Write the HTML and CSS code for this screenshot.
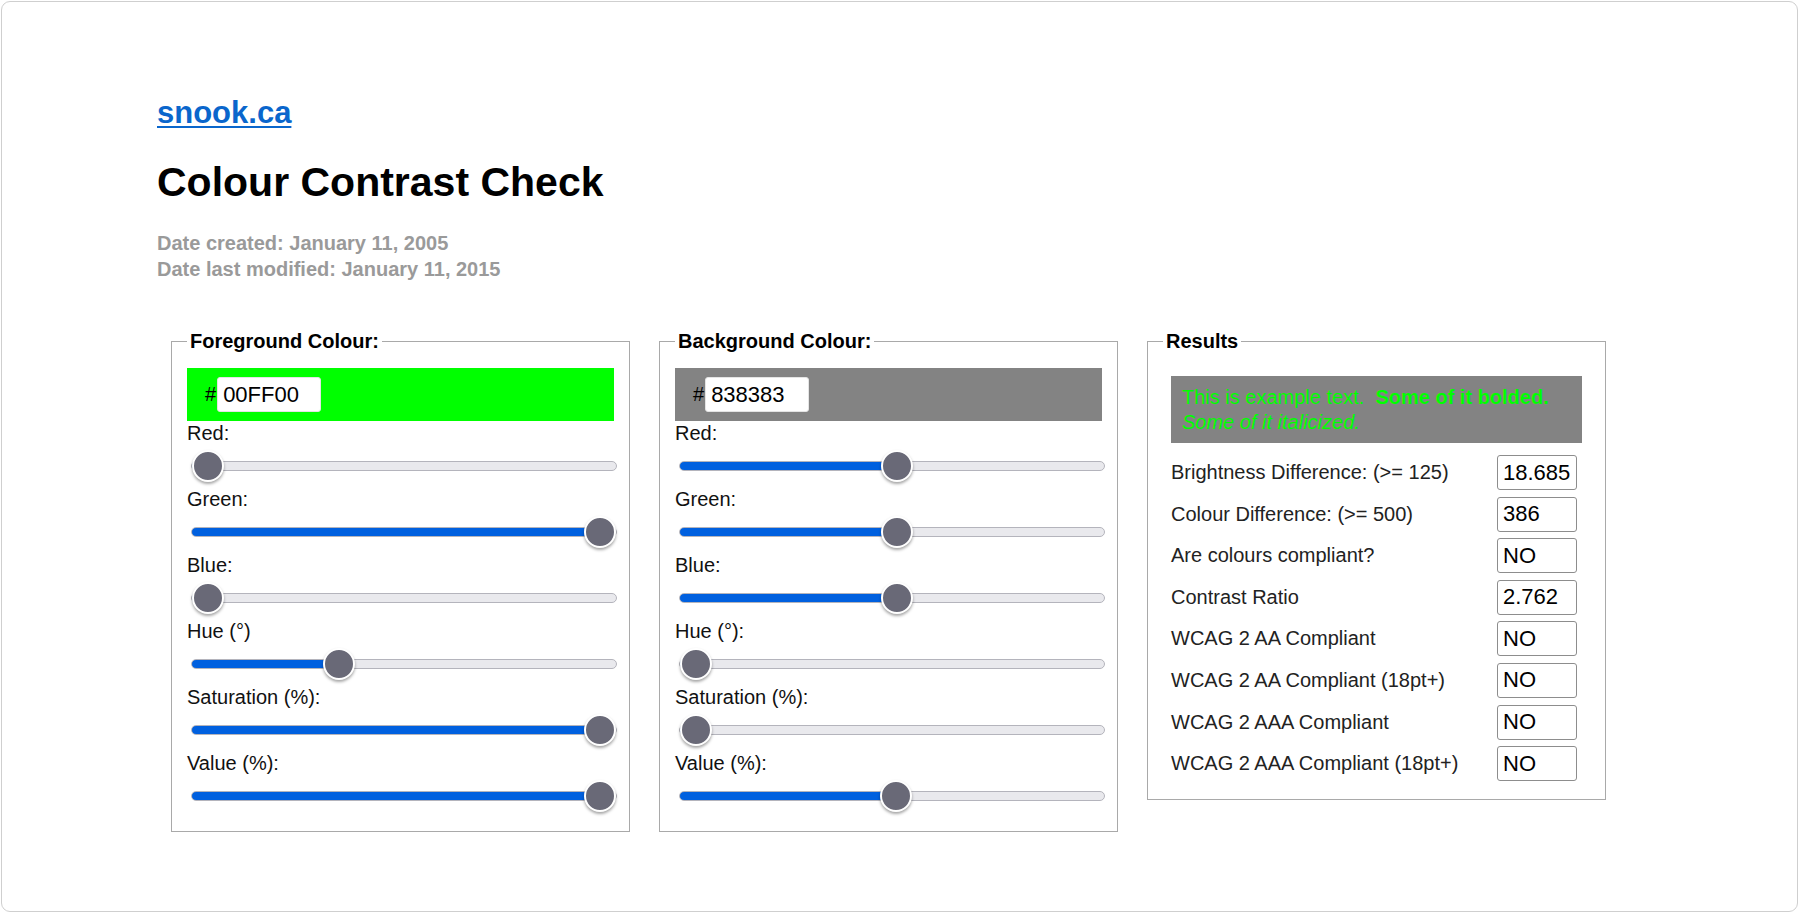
FILE: index.html
```html
<!DOCTYPE html>
<html lang="en">
<head>
<meta charset="utf-8">
<title>Colour Contrast Check</title>
<link rel="stylesheet" href="styles.css">
</head>
<body>
<div class="frame">
  <p class="site"><a href="#">snook.ca</a></p>
  <h1 class="title">Colour Contrast Check</h1>
  <p class="dates">Date created: January 11, 2005<br>Date last modified: January 11, 2015</p>

  <div class="panels">
    <fieldset class="panel">
      <legend>Foreground Colour:</legend>
      <div class="swatch swatch-fg">
        <span class="hash">#</span><input class="hex" type="text" value="00FF00">
      </div>
      <label class="lbl">Red:</label>
      <input class="range" type="range" min="0" max="255" value="0" style="--v:0">
      <label class="lbl">Green:</label>
      <input class="range" type="range" min="0" max="255" value="255" style="--v:1">
      <label class="lbl">Blue:</label>
      <input class="range" type="range" min="0" max="255" value="0" style="--v:0">
      <label class="lbl">Hue (°)</label>
      <input class="range" type="range" min="0" max="360" value="120" style="--v:0.3333">
      <label class="lbl">Saturation (%):</label>
      <input class="range" type="range" min="0" max="100" value="100" style="--v:1">
      <label class="lbl">Value (%):</label>
      <input class="range" type="range" min="0" max="100" value="100" style="--v:1">
    </fieldset>

    <fieldset class="panel">
      <legend>Background Colour:</legend>
      <div class="swatch swatch-bg">
        <span class="hash">#</span><input class="hex" type="text" value="838383">
      </div>
      <label class="lbl">Red:</label>
      <input class="range" type="range" min="0" max="255" value="131" style="--v:0.5137">
      <label class="lbl">Green:</label>
      <input class="range" type="range" min="0" max="255" value="131" style="--v:0.5137">
      <label class="lbl">Blue:</label>
      <input class="range" type="range" min="0" max="255" value="131" style="--v:0.5137">
      <label class="lbl">Hue (°):</label>
      <input class="range" type="range" min="0" max="360" value="0" style="--v:0">
      <label class="lbl">Saturation (%):</label>
      <input class="range" type="range" min="0" max="100" value="0" style="--v:0">
      <label class="lbl">Value (%):</label>
      <input class="range" type="range" min="0" max="100" value="51" style="--v:0.51">
    </fieldset>

    <fieldset class="panel">
      <legend>Results</legend>
      <div class="results">
        <div class="sample">This is example text.&nbsp; <strong>Some of it bolded.</strong> <em>Some of it italicized.</em></div>
        <div class="rows">
          <span class="rlabel">Brightness Difference: (&gt;= 125)</span><input class="out" type="text" value="18.685" readonly>
          <span class="rlabel">Colour Difference: (&gt;= 500)</span><input class="out" type="text" value="386" readonly>
          <span class="rlabel">Are colours compliant?</span><input class="out" type="text" value="NO" readonly>
          <span class="rlabel">Contrast Ratio</span><input class="out" type="text" value="2.762" readonly>
          <span class="rlabel">WCAG 2 AA Compliant</span><input class="out" type="text" value="NO" readonly>
          <span class="rlabel">WCAG 2 AA Compliant (18pt+)</span><input class="out" type="text" value="NO" readonly>
          <span class="rlabel">WCAG 2 AAA Compliant</span><input class="out" type="text" value="NO" readonly>
          <span class="rlabel">WCAG 2 AAA Compliant (18pt+)</span><input class="out" type="text" value="NO" readonly>
        </div>
      </div>
    </fieldset>
  </div>
</div>
</body>
</html>
```

FILE: styles.css
```css
* { box-sizing: border-box; }

html, body {
  margin: 0;
  padding: 0;
  background: #fff;
}

body {
  font-family: "Liberation Sans", Arial, Helvetica, sans-serif;
  font-size: 20px;
  color: #222;
}

.frame {
  margin: 1px 1px 0 1px;
  width: 1797px;
  height: 911px;
  border: 1px solid #cfcfcf;
  border-radius: 9px;
  padding: 94px 0 0 155px;
  overflow: hidden;
}

.site {
  margin: 0;
  font-size: 31px;
  font-weight: bold;
  line-height: 34px;
}

.site a {
  color: #0a66cc;
  text-decoration: underline;
  text-decoration-thickness: 2px;
  text-underline-offset: 3px;
}

.title {
  margin: 29px 0 0;
  font-size: 41px;
  font-weight: bold;
  line-height: 46px;
  color: #000;
}

.dates {
  margin: 25px 0 0;
  font-size: 20px;
  font-weight: bold;
  line-height: 26px;
  color: #9a9a9a;
}

.panels {
  display: flex;
  align-items: flex-start;
  gap: 29px;
  margin-top: 47.5px;
  padding-left: 14px;
}

.panel {
  width: 459px;
  min-width: 0;
  margin: 0;
  padding: 15px 15px 14px;
  border: 1px solid #a9a9a9;
}

.panel legend {
  padding: 0 3px;
  font-weight: bold;
  font-size: 20px;
  line-height: 23px;
  color: #000;
}

.swatch {
  display: flex;
  align-items: center;
  height: 53px;
  padding: 1px 18px 0;
}

.swatch-fg { background: #00ff00; }
.swatch-bg { background: #838383; }

.hash {
  font-size: 20px;
  color: #000;
  margin-right: 1px;
}

.hex {
  width: 104px;
  height: 35px;
  padding: 0 5px;
  border: 1px solid #e4e4e4;
  border-radius: 3px;
  background: #fff;
  font-family: "Liberation Sans", Arial, sans-serif;
  font-size: 22px;
  color: #000;
}

.lbl {
  display: block;
  margin: 0;
  line-height: 25px;
  color: #111;
}

.range {
  -webkit-appearance: none;
  appearance: none;
  display: block;
  width: 426px;
  height: 10px;
  margin: 15px 0 16px 4px;
  padding: 0;
  background: transparent;
}

.range::-webkit-slider-runnable-track {
  box-sizing: border-box;
  height: 10px;
  border: 1px solid #b4b4bc;
  border-radius: 5px;
  background: linear-gradient(to right, #0060df calc(15px + var(--v) * (100% - 30px)), #e9e9ed 0);
}

.range::-webkit-slider-thumb {
  -webkit-appearance: none;
  appearance: none;
  box-sizing: border-box;
  width: 32px;
  height: 32px;
  margin-top: -12px;
  border-radius: 50%;
  border: 2px solid #fff;
  background: #696977;
  box-shadow: 0 2px 3px rgba(0, 0, 0, 0.35);
}

.results {
  padding: 8px 8px 4px;
}

.sample {
  background: #838383;
  color: #00ff00;
  padding: 9px 11px 8px;
  line-height: 25px;
  font-size: 20px;
}

.rows {
  display: grid;
  grid-template-columns: 1fr 80px;
  row-gap: 6.6px;
  align-items: center;
  margin: 12.5px 5px 0 0;
}

.rlabel {
  font-size: 20px;
  line-height: 25px;
  color: #222;
}

.out {
  width: 80px;
  height: 35px;
  padding: 0 5px;
  border: 1px solid #8d8d8d;
  border-radius: 3px;
  background: #fff;
  font-family: "Liberation Sans", Arial, sans-serif;
  font-size: 22px;
  color: #000;
}
```
